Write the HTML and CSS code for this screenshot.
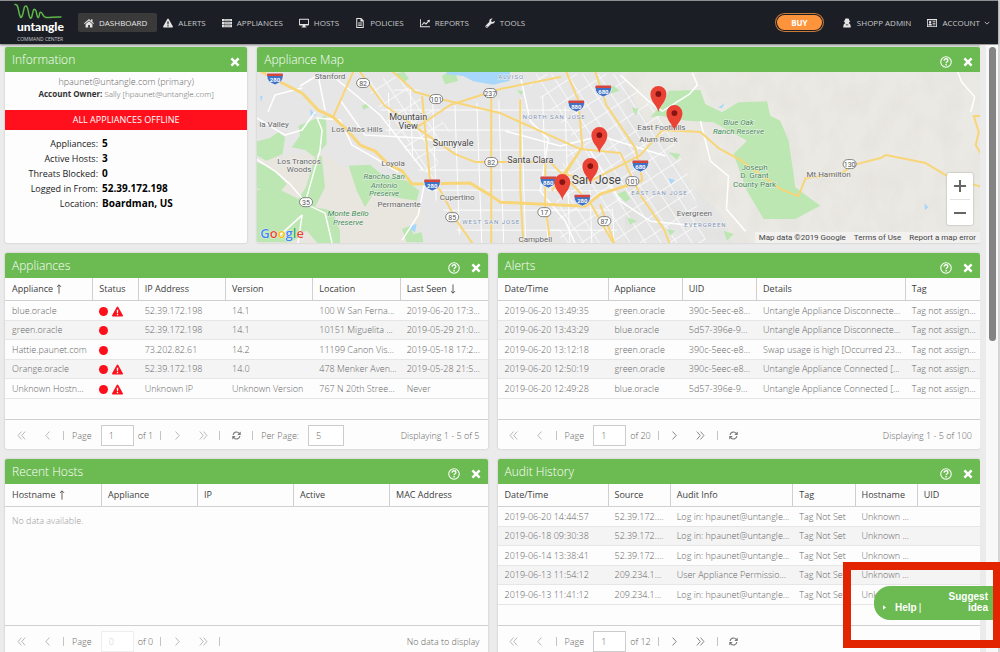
FILE: index.html
```html
<!DOCTYPE html>
<html lang="en">
<head>
<meta charset="utf-8">
<title>Untangle Command Center</title>
<link rel="stylesheet" href="styles.css">
</head>
<body>
<svg class="sprite" aria-hidden="true">
  <symbol id="home" viewBox="0 0 16 16"><path d="M8 1.5 0 8.4l1.2 1.3L8 3.9l6.800 5.800L16 8.400l-2.500-2.200V2h-2.200v2.300z"/><path d="M8 5.200 2.500 9.900V15h4.100v-4h2.800v4h4.100V9.900z"/></symbol>
  <symbol id="warn" viewBox="0 0 16 16"><path fill-rule="evenodd" d="M8 .8c.5 0 .9.3 1.100.7l6.700 11.900c.5.900-.1 1.800-1.100 1.800H1.300c-1 0-1.600-.9-1.100-1.800L6.900 1.500C7.100 1.100 7.500.8 8 .8zM6.900 5.400l.3 5h1.600l.3-5zm.1 6.200v1.900h2v-1.900z"/></symbol>
  <symbol id="server" viewBox="0 0 16 16"><path d="M0 1.500h16v3.700H0zM0 6.200h16v3.700H0zM0 10.900h16v3.700H0z"/><path d="M4.500 1.500v13M6 3.400h8M6 8h8M6 12.700h8" stroke="#1b1e25" stroke-width=".7"/></symbol>
  <symbol id="screen" viewBox="0 0 16 16"><path fill-rule="evenodd" d="M1.500 1h13q1.500 0 1.500 1.500v8q0 1.500-1.500 1.500H10l.5 2H12v1.200H4V14h1.500l.5-2H1.500Q0 12 0 10.500v-8Q0 1 1.500 1zm0 1.600v6.800h13V2.600z"/></symbol>
  <symbol id="file" viewBox="0 0 16 16"><path fill-rule="evenodd" d="M2 0h8l4 4v12H2zm1.600 1.500v13h8.800V5.400H8.700V1.500zM5 7h6v1.200H5zm0 2.300h6v1.200H5zm0 2.300h6v1.200H5z"/></symbol>
  <symbol id="chart" viewBox="0 0 16 16"><path d="M0 2h1.400v11.200H16v1.400H0zM2.600 10.800 6.400 6l3 2.400 3.200-3.700-1.300-1.300 4.500-.6-.4 4.400-1.400-1.300-4.300 5-3.100-2.400-3.700 3.900z"/></symbol>
  <symbol id="wrench" viewBox="0 0 16 16"><path fill-rule="evenodd" d="M15.500 4.300c.9 3.100-2.200 5.900-5.300 4.700l-6.100 6c-1.900 1.700-4.700-1-3-3l6-6C6 2.800 9 0 12.200.9L9.800 3.500l.4 2.300 2.400.5zM2.800 12.300a.9.900 0 1 0 .1 1.800.9.900 0 0 0-.1-1.800z"/></symbol>
  <symbol id="agent" viewBox="0 0 16 16"><path fill-rule="evenodd" d="M5 1.200Q6.300.2 8 .9q1.700-.7 3 .3l.7 3.300h1.300v1.300h-1.200q0 1.700-1 2.700 3.200 1 3.200 6.500H2q0-5.500 3.200-6.500-1-1-1-2.700H3V4.500h1.300zM6 10.500v1.200h4v-1.200z"/></symbol>
  <symbol id="card" viewBox="0 0 16 16"><path fill-rule="evenodd" d="M0 1.500h16v13H0zm1.300 2.200v9.500h13.400V3.700zM5 4.800a1.900 1.900 0 1 1 0 3.900 1.900 1.900 0 0 1 0-3.900zM2.200 12q0-2.700 1.500-2.700h2.600q1.500 0 1.500 2.700zM9 5h4.500v1.300H9zm0 2.700h4.500V9H9zm0 2.700h4.500v1.300H9z"/></symbol>
  <symbol id="close" viewBox="0 0 16 16"><path d="M3.600.8 8 5.200 12.400.8l2.800 2.800L10.800 8l4.400 4.400-2.800 2.800L8 10.800l-4.400 4.400-2.800-2.800L5.200 8 .8 3.600z"/></symbol>
  <symbol id="help" viewBox="0 0 16 16"><circle cx="8" cy="8" r="7" fill="none" stroke="currentColor" stroke-width="1.400"/><path d="M5.500 6.200C5.500 2.700 10.600 3 10.600 6c0 1.800-2.500 1.700-2.500 3.600" fill="none" stroke="currentColor" stroke-width="1.700"/><path d="M7.200 10.800H9v1.700H7.200z"/></symbol>
  <symbol id="first" viewBox="0 0 16 16"><path d="M8 1 2 8l6 7M14.500 1l-6 7 6 7" class="line"/></symbol>
  <symbol id="prev" viewBox="0 0 16 16"><path d="M11.500 1 5 8l6.500 7" class="line"/></symbol>
  <symbol id="next" viewBox="0 0 16 16"><path d="M4.500 1 11 8l-6.500 7" class="line"/></symbol>
  <symbol id="last" viewBox="0 0 16 16"><path d="M1.500 1l6 7-6 7M8 1l6 7-6 7" class="line"/></symbol>
  <symbol id="refresh" viewBox="0 0 16 16"><path d="M2 7C2.500 1.500 9.500 0 13 4.300M14 9c-.5 5.500-7.500 7-11 2.700" fill="none" stroke="currentColor" stroke-width="2"/><path d="M15.500 1v6H9.500zM.5 15V9h6z"/></symbol>
  <symbol id="up" viewBox="0 0 8 12"><path d="M4 11.500V1M1.500 3.500 4 1l2.500 2.500" class="thin"/></symbol>
  <symbol id="down" viewBox="0 0 8 12"><path d="M4 .5V11M1.500 8.500 4 11l2.500-2.500" class="thin"/></symbol>
  <symbol id="chev" viewBox="0 0 8 8"><path d="M1 2.500 4 5.500l3-3" class="thin"/></symbol>
</svg>

<div class="window">
  <header class="topbar">
    <a class="logo" href="#">
      <svg class="squiggle" viewBox="0 0 48 18" aria-hidden="true"><path d="M1 1.500C4 1 4 5 5 9.500S7 17 8.500 12 10 2.500 12 3s2 5 3 9 2 4.500 3 1 1-7 2.800-6.600 1.500 4 2.400 6.600 1.600 2 2-.5.800-4 2.200-3 1.500 4.500 4.500 5 9-.8 15-.5"/></svg>
      <span class="brand">untangle</span>
      <span class="tagline">COMMAND CENTER</span>
    </a>
    <nav class="menu">
      <a class="item active" href="#"><svg><use href="#home"/></svg>DASHBOARD</a>
      <a class="item" href="#"><svg><use href="#warn"/></svg>ALERTS</a>
      <a class="item" href="#"><svg><use href="#server"/></svg>APPLIANCES</a>
      <a class="item" href="#"><svg><use href="#screen"/></svg>HOSTS</a>
      <a class="item" href="#"><svg><use href="#file"/></svg>POLICIES</a>
      <a class="item" href="#"><svg><use href="#chart"/></svg>REPORTS</a>
      <a class="item" href="#"><svg><use href="#wrench"/></svg>TOOLS</a>
    </nav>
    <div class="user">
      <button class="buy" type="button">BUY</button>
      <a class="item" href="#"><svg><use href="#agent"/></svg>SHOPP ADMIN</a>
      <a class="item account" href="#"><svg><use href="#card"/></svg>ACCOUNT<svg class="caret"><use href="#chev"/></svg></a>
    </div>
  </header>

  <div class="viewport">
  <main class="board">
    <div class="row top">
      <section class="panel">
        <header class="head"><h2>Information</h2><button type="button" aria-label="Close"><svg><use href="#close"/></svg></button></header>
        <div class="info">
          <p class="mail">hpaunet@untangle.com (primary)</p>
          <p class="owner"><b>Account Owner:</b> Sally [hpaunet@untangle.com]</p>
          <p class="offline">ALL APPLIANCES OFFLINE</p>
          <dl class="stats">
            <dt>Appliances:</dt><dd>5</dd>
            <dt>Active Hosts:</dt><dd>3</dd>
            <dt>Threats Blocked:</dt><dd>0</dd>
            <dt>Logged in From:</dt><dd>52.39.172.198</dd>
            <dt>Location:</dt><dd>Boardman, US</dd>
          </dl>
        </div>
      </section>

      <section class="panel">
        <header class="head"><h2>Appliance Map</h2><button type="button" aria-label="Help"><svg class="round"><use href="#help"/></svg></button><button type="button" aria-label="Close"><svg><use href="#close"/></svg></button></header>
        <div class="map">
          <svg class="canvas" viewBox="257 72 722 171" preserveAspectRatio="xMinYMin slice" role="img" aria-label="Map of San Jose">
            <defs>
              <pattern id="grid" width="22" height="20" patternUnits="userSpaceOnUse" patternTransform="skewX(2)"><path d="M0 10H22M11 0V20" stroke="#fff" stroke-width=".9" fill="none"/></pattern>
              <pattern id="diag" width="13" height="16" patternUnits="userSpaceOnUse" patternTransform="rotate(-33)"><path d="M0 8H13M6 0V16" stroke="#fbfbfb" stroke-width=".8" fill="none"/></pattern>
              <filter id="relief" x="0" y="0" width="100%" height="100%"><feTurbulence type="fractalNoise" baseFrequency=".05 .035" numOctaves="4" seed="8"/><feColorMatrix values="0 0 0 0 .6  0 0 0 0 .59  0 0 0 0 .55  1.400 0 0 0 -.55"/></filter>
              <g id="pin"><path d="M0 0C-.8-6-8-10-8-18a8 8 0 0 1 16 0C8-10 .8-6 0 0z" fill="#ea4335"/><circle cy="-18" r="2.900" fill="#851412"/></g>
              <g id="shield"><path d="M-8-5.500Q-9 0-5 3.500L0 6l5-2.500Q9 0 8-5.500z" fill="#4272c4" stroke="#fff" stroke-width=".7"/><path d="M-7.600-5.500H7.600L8-3H-8z" fill="#d5463d"/></g>
              <rect id="oval" x="-6.500" y="-4.500" width="13" height="9" rx="4.500" fill="#fff" stroke="#777" stroke-width=".9"/>
            </defs>
            <rect x="250" y="72" width="740" height="180" fill="#e6e6e6"/>
            <path d="M620 72H990V252H735L722 215 690 185 668 150 640 112z" fill="#ebe9e4"/>
            <path d="M250 160 320 152 345 168 410 185 425 215 405 252H250z" fill="#e9e6e0"/>
            <rect x="625" y="72" width="365" height="180" filter="url(#relief)" opacity=".2"/>

            <path d="M378 98 405 84 455 105 550 95 582 120 580 150 556 185 560 243H465L440 205 424 186 415 160 385 130z" fill="url(#grid)"/>
            <path d="M362 80 400 76 450 130 432 180 408 155z" fill="url(#diag)"/>
            <path d="M520 74H622L664 122 690 180 706 243H560L555 178 575 140z" fill="url(#diag)"/>
            <path d="M548 190h60l12 53h-72z" fill="url(#grid)"/>

            <g transform="translate(250 44) scale(.333)" fill="#bce7b2">
              <path d="M10 295 60 282 85 265 105 280 98 330 50 350 10 330zM145 245 195 225 228 215 230 300 195 340 165 318 125 310 150 275zM195 340 215 335 225 430 195 490 248 500 270 560 270 600H205L170 560 130 575 85 530 30 540 10 440 75 430 145 465 168 430z"/>
              <path d="M10 350 70 375 110 420 85 450 10 430zM296 365 360 362 400 395 470 410 508 440 500 470 370 450 345 490 320 440zM456 555 480 545 490 570 515 565 520 595H470zM335 185l18-8 5 12-17 8zM575 97l22-16 20 10 8 20-40 10zM432 90l30-6 15 20-15 10z"/>
              <path d="M10 455h64l60 60 25 60-40 20H10z"/>
            </g>
            <g transform="translate(500 44) scale(.333)" fill="#bce7b2">
              <path d="M450 220 495 170 505 140 600 138 615 180 665 205 715 175 800 172 810 215 840 230 865 290 880 390 885 430 960 485 885 525H790L740 440 700 330 740 290 640 235 560 230 480 215zM350 450l25-10 15 25-15 8zM395 190l20 5-10 20zM505 325l35 5-10 18zM670 560l30 10-20 20zM500 555l25 5-15 15zM310 130l30-5 18 15-30 10zM380 520l30 10-20 12zM50 138l20 4-8 12z"/>
            </g>
            <g transform="translate(250 44) scale(.333)" fill="#a7d8fb"><path d="M590 84h190v26l-50 12-60-10-30-16-50-5zM180 195l18 18-15 5zM30 155l8 2-5 18zM480 545l20-5-5 25-12-8zM1255 403l20 5-12 12zM1405 190l20-12-10 15zM2023 478l12 12-10 8z"/></g>

            <g fill="none" stroke="#fff" stroke-width="1.500" stroke-linejoin="round">
              <path d="M250 155 275 171 290 184 308 205 325 213 332 243M305 203 320 150 322 130 317 118 340 120 352 145 375 158 398 172M300 86 318 75 325 110M250 114 285 135 302 130 315 112M335 78 380 115 423 170M268 112 275 95 302 88M298 243 302 215 280 235M425 180 418 215 402 240M340 100 365 135 420 138 455 144"/>
              <path d="M957 72 961 82 974 97 970 112M620 75 648 101 662 111 689 94 697 85 692 73M700 121 710 161 728 176 726 209 745 231M520 76 530 121 548 139 540 191 565 221 575 244M590 151 620 201 650 221 700 226M505 131 560 146 600 136 665 156"/>
            </g>
            <g fill="none" stroke="#f8d577" stroke-width="3" stroke-linejoin="round" stroke-linecap="round">
              <path d="M262 72 280 82 302 93 318 110 333 117 345 128 360 145 375 151 388 164 402 171 412 184 470 183 490 195 500 202 585 206 600 194 640 181"/>
              <path d="M393 72 415 92 440 99 500 113 580 149 620 153 640 195 664 230 669 243M595 72 606 105 635 148 642 180M566 72 578 100 582 147M333 117 353 72M360 72 384 105 417 128 455 154 475 162 550 162 590 203 613 243M417 127 450 105 500 89 560 77M422 97 430 182 440 190 456 220 472 243M491 95V243M545 160V205L550 243M520 100 520 190 523 243" stroke-width="2"/>
              <path d="M552 190 582 147 565 174 590 181 640 155 662 130 700 132 718 148 740 160 780 189 798 196 805 178 840 174 852 165 880 158 885 155 925 163 945 175 990 190M982 116 973 116 978 132 975 145 982 157M600 205 614 243" stroke-width="2"/>
            </g>

            <g class="mark">
              <use href="#shield" x="275" y="79"/><text x="275" y="82">280</text>
              <use href="#shield" x="432" y="185"/><text x="432" y="188">280</text>
              <use href="#shield" x="603" y="91"/><text x="603" y="94">680</text>
              <use href="#shield" x="576" y="106"/><text x="576" y="109">880</text>
              <use href="#shield" x="640" y="166"/><text x="640" y="169">680</text>
              <use href="#shield" x="548" y="182"/><text x="548" y="185">880</text>
              <use href="#shield" x="582" y="200"/><text x="582" y="203">280</text>
            </g>
            <g class="route">
              <use href="#oval" x="363" y="83"/><text x="363" y="86">82</text>
              <use href="#oval" x="436" y="99"/><text x="436" y="102">101</text>
              <use href="#oval" x="490" y="93"/><text x="490" y="96">237</text>
              <use href="#oval" x="491" y="162"/><text x="491" y="165">82</text>
              <use href="#oval" x="306" y="202"/><text x="306" y="205">35</text>
              <use href="#oval" x="452" y="217"/><text x="452" y="220">85</text>
              <use href="#oval" x="544" y="212"/><text x="544" y="215">17</text>
              <use href="#oval" x="604" y="221"/><text x="604" y="224">87</text>
              <use href="#oval" x="632" y="181"/><text x="632" y="184">101</text>
              <use href="#oval" x="849" y="164"/><text x="849" y="167">130</text>
            </g>
            <g class="place">
              <text x="330" y="79">Stanford</text><text x="274" y="127">la Valley</text><text x="357" y="132">Los Altos Hills</text>
              <text x="299" y="164">Los Trancos</text><text x="299" y="172">Woods</text><text x="393" y="166">Loyola</text><text x="399" y="207">Permanente</text>
              <text x="457" y="200">Cupertino</text><text x="535" y="242">Campbell</text><text x="661" y="130">East Foothills</text><text x="658" y="142">Alum Rock</text><text x="694" y="216">Evergreen</text><text x="828" y="177">Mt Hamilton</text>
            </g>
            <g class="place town">
              <text x="408" y="120">Mountain</text><text x="408" y="129">View</text><text x="453" y="146">Sunnyvale</text><text x="530" y="163">Santa Clara</text>
            </g>
            <text class="place city" x="596" y="184">San Jose</text>
            <g class="place park">
              <text x="384" y="179">Rancho San</text><text x="384" y="188">Antonio</text><text x="384" y="196">Preserve</text><text x="348" y="216">Monte Bello</text><text x="348" y="225">Preserve</text>
              <text x="738" y="125">Blue Oak</text><text x="738" y="134">Ranch Reserve</text>
            </g>
            <g class="place park upright"><text x="754" y="170">Joseph</text><text x="754" y="178">D. Grant</text><text x="754" y="187">County Park</text></g>
            <g class="place area"><text x="554" y="119">NORTH SAN JOSE</text><text x="491" y="224">WEST SAN JOSE</text><text x="659" y="195">EAST SAN JOSE</text><text x="705" y="227">EVERGREEN</text><text x="511" y="79">ALVISO</text></g>

            <use href="#pin" x="658" y="112"/><use href="#pin" x="674" y="131"/><use href="#pin" x="599" y="153"/><use href="#pin" x="590" y="184"/><use href="#pin" x="562" y="200"/>
          </svg>
          <div class="google"><span class="b">G</span><span class="r">o</span><span class="y">o</span><span class="b">g</span><span class="g">l</span><span class="r">e</span></div>
          <div class="zoom"><button type="button" aria-label="Zoom in"><svg viewBox="0 0 12 12"><path d="M6 0V12M0 6H12"/></svg></button><button type="button" aria-label="Zoom out"><svg viewBox="0 0 12 12"><path d="M0 6H12"/></svg></button></div>
          <div class="credits"><span>Map data ©2019 Google</span><a href="#">Terms of Use</a><a href="#">Report a map error</a></div>
        </div>
      </section>
    </div>

    <div class="row">
      <section class="panel">
        <header class="head"><h2>Appliances</h2><button type="button" aria-label="Help"><svg class="round"><use href="#help"/></svg></button><button type="button" aria-label="Close"><svg><use href="#close"/></svg></button></header>
        <div class="data">
          <table>
            <colgroup><col class="w18"><col class="w9"><col class="w18"><col class="w18"><col class="w18"><col></colgroup>
            <thead><tr><th>Appliance <svg><use href="#up"/></svg></th><th>Status</th><th>IP Address</th><th>Version</th><th>Location</th><th>Last Seen <svg><use href="#down"/></svg></th></tr></thead>
            <tbody>
              <tr><td>blue.oracle</td><td><i class="dot"></i><svg class="alert"><use href="#warn"/></svg></td><td>52.39.172.198</td><td>14.1</td><td>100 W San Ferna...</td><td>2019-06-20 17:3...</td></tr>
              <tr><td>green.oracle</td><td><i class="dot"></i></td><td>52.39.172.198</td><td>14.1</td><td>10151 Miguelita ...</td><td>2019-05-29 21:0...</td></tr>
              <tr><td>Hattie.paunet.com</td><td><i class="dot"></i></td><td>73.202.82.61</td><td>14.2</td><td>11199 Canon Vis...</td><td>2019-05-18 17:2...</td></tr>
              <tr><td>Orange.oracle</td><td><i class="dot"></i><svg class="alert"><use href="#warn"/></svg></td><td>52.39.172.198</td><td>14.0</td><td>478 Menker Aven...</td><td>2019-05-28 21:5...</td></tr>
              <tr><td>Unknown Hostn...</td><td><i class="dot"></i><svg class="alert"><use href="#warn"/></svg></td><td>Unknown IP</td><td>Unknown Version</td><td>767 N 20th Stree...</td><td>Never</td></tr>
            </tbody>
          </table>
        </div>
        <footer class="pager">
          <button type="button" disabled aria-label="First page"><svg><use href="#first"/></svg></button><button type="button" disabled aria-label="Previous page"><svg><use href="#prev"/></svg></button><i class="sep"></i>
          <label for="p1">Page</label><input id="p1" value="1"><span class="of">of 1</span><i class="sep"></i>
          <button type="button" disabled aria-label="Next page"><svg><use href="#next"/></svg></button><button type="button" disabled aria-label="Last page"><svg><use href="#last"/></svg></button><i class="sep"></i>
          <button type="button" aria-label="Refresh"><svg><use href="#refresh"/></svg></button><i class="sep"></i>
          <label for="pp">Per Page:</label><input id="pp" class="wide" value="5"><span class="total">Displaying 1 - 5 of 5</span>
        </footer>
      </section>

      <section class="panel">
        <header class="head"><h2>Alerts</h2><button type="button" aria-label="Help"><svg class="round"><use href="#help"/></svg></button><button type="button" aria-label="Close"><svg><use href="#close"/></svg></button></header>
        <div class="data">
          <table>
            <colgroup><col class="w23"><col class="w15"><col class="w15"><col class="w31"><col></colgroup>
            <thead><tr><th>Date/Time</th><th>Appliance</th><th>UID</th><th>Details</th><th>Tag</th></tr></thead>
            <tbody>
              <tr><td>2019-06-20 13:49:35</td><td>green.oracle</td><td>390c-5eec-e8...</td><td>Untangle Appliance Disconnecte...</td><td>Tag not assign...</td></tr>
              <tr><td>2019-06-20 13:43:29</td><td>blue.oracle</td><td>5d57-396e-9...</td><td>Untangle Appliance Disconnecte...</td><td>Tag not assign...</td></tr>
              <tr><td>2019-06-20 13:12:18</td><td>green.oracle</td><td>390c-5eec-e8...</td><td>Swap usage is high [Occurred 23...</td><td>Tag not assign...</td></tr>
              <tr><td>2019-06-20 12:50:19</td><td>green.oracle</td><td>390c-5eec-e8...</td><td>Untangle Appliance Connected [...</td><td>Tag not assign...</td></tr>
              <tr><td>2019-06-20 12:49:28</td><td>blue.oracle</td><td>5d57-396e-9...</td><td>Untangle Appliance Connected [...</td><td>Tag not assign...</td></tr>
            </tbody>
          </table>
        </div>
        <footer class="pager">
          <button type="button" disabled aria-label="First page"><svg><use href="#first"/></svg></button><button type="button" disabled aria-label="Previous page"><svg><use href="#prev"/></svg></button><i class="sep"></i>
          <label for="p2">Page</label><input id="p2" value="1"><span class="of">of 20</span><i class="sep"></i>
          <button type="button" aria-label="Next page"><svg><use href="#next"/></svg></button><button type="button" aria-label="Last page"><svg><use href="#last"/></svg></button><i class="sep"></i>
          <button type="button" aria-label="Refresh"><svg><use href="#refresh"/></svg></button><span class="total">Displaying 1 - 5 of 100</span>
        </footer>
      </section>
    </div>

    <div class="row">
      <section class="panel">
        <header class="head"><h2>Recent Hosts</h2><button type="button" aria-label="Help"><svg class="round"><use href="#help"/></svg></button><button type="button" aria-label="Close"><svg><use href="#close"/></svg></button></header>
        <div class="data">
          <table>
            <colgroup><col class="w20"><col class="w20"><col class="w20"><col class="w20"><col></colgroup>
            <thead><tr><th>Hostname <svg><use href="#up"/></svg></th><th>Appliance</th><th>IP</th><th>Active</th><th>MAC Address</th></tr></thead>
          </table>
          <p class="empty">No data available.</p>
        </div>
        <footer class="pager">
          <button type="button" disabled aria-label="First page"><svg><use href="#first"/></svg></button><button type="button" disabled aria-label="Previous page"><svg><use href="#prev"/></svg></button><i class="sep"></i>
          <label for="p3">Page</label><input id="p3" value="0" disabled><span class="of">of 0</span><i class="sep"></i>
          <button type="button" disabled aria-label="Next page"><svg><use href="#next"/></svg></button><button type="button" disabled aria-label="Last page"><svg><use href="#last"/></svg></button><i class="sep"></i>
          <span class="total">No data to display</span>
        </footer>
      </section>

      <section class="panel">
        <header class="head"><h2>Audit History</h2><button type="button" aria-label="Help"><svg class="round"><use href="#help"/></svg></button><button type="button" aria-label="Close"><svg><use href="#close"/></svg></button></header>
        <div class="data">
          <table>
            <colgroup><col class="w23"><col class="w13"><col class="w25"><col class="w13"><col class="w13"><col></colgroup>
            <thead><tr><th>Date/Time</th><th>Source</th><th>Audit Info</th><th>Tag</th><th>Hostname</th><th>UID</th></tr></thead>
            <tbody>
              <tr><td>2019-06-20 14:44:57</td><td>52.39.172....</td><td>Log in: hpaunet@untangle...</td><td>Tag Not Set</td><td>Unknown ...</td><td></td></tr>
              <tr><td>2019-06-18 09:30:38</td><td>52.39.172....</td><td>Log in: hpaunet@untangle...</td><td>Tag Not Set</td><td>Unknown ...</td><td></td></tr>
              <tr><td>2019-06-14 13:38:41</td><td>52.39.172....</td><td>Log in: hpaunet@untangle...</td><td>Tag Not Set</td><td>Unknown ...</td><td></td></tr>
              <tr><td>2019-06-13 11:54:12</td><td>209.234.1...</td><td>User Appliance Permissio...</td><td>Tag Not Set</td><td>Unknown ...</td><td></td></tr>
              <tr><td>2019-06-13 11:41:12</td><td>209.234.1...</td><td>Log in: hpaunet@untangle...</td><td>Tag Not Set</td><td>Unknown ...</td><td></td></tr>
            </tbody>
          </table>
        </div>
        <footer class="pager">
          <button type="button" disabled aria-label="First page"><svg><use href="#first"/></svg></button><button type="button" disabled aria-label="Previous page"><svg><use href="#prev"/></svg></button><i class="sep"></i>
          <label for="p4">Page</label><input id="p4" value="1"><span class="of">of 12</span><i class="sep"></i>
          <button type="button" aria-label="Next page"><svg><use href="#next"/></svg></button><button type="button" aria-label="Last page"><svg><use href="#last"/></svg></button><i class="sep"></i>
          <button type="button" aria-label="Refresh"><svg><use href="#refresh"/></svg></button>
        </footer>
      </section>
    </div>
  </main>
  <div class="track"><div class="thumb"></div></div>
  </div>
</div>

<div class="callout">
  <div class="tab"><svg viewBox="0 0 4 6" aria-hidden="true"><path d="M0 0 4 3 0 6z"/></svg><a href="#">Help</a><span>|</span><a class="idea" href="#">Suggest idea</a></div>
</div>
</body>
</html>
```

FILE: styles.css
```css
* { box-sizing: border-box; }
html, body { height: 100%; }
body {
  margin: 0;
  padding-right: 2px;
  overflow: hidden;
  background: #d5d5d5;
  color: #666;
  font: 300 9px/12px "Open Sans", "Noto Sans", sans-serif;
}
h2, p, dl, dd { margin: 0; }
a { color: inherit; text-decoration: none; }
button { margin: 0; padding: 0; border: 0; background: none; color: inherit; font: inherit; }
svg { fill: currentColor; }
.sprite { display: none; }
.line { fill: none; stroke: currentColor; stroke-width: 1.6; }
.thin { fill: none; stroke: currentColor; stroke-width: 1; }

.window { display: flex; flex-direction: column; height: 100%; background: #ebebeb; }

/* top bar */
.topbar {
  display: flex;
  flex: none;
  align-items: center;
  height: 44px;
  margin-bottom: 1px;
  padding: 0 8px 0 14px;
  border-top: 1px solid #8d8f90;
  background: #1b1e25;
  box-shadow: 0 1px 2px #777;
  color: #c8c9ca;
  font-weight: 400;
  font-size: 8px;
}
.logo { display: flex; flex-direction: column; width: 64px; }
.squiggle { width: 48px; height: 18px; }
.squiggle path { fill: none; stroke: #5fb548; stroke-width: 1.5; stroke-linecap: round; }
.brand { margin-left: 3px; color: #fff; font: 900 12px/12px Lato, sans-serif; }
.tagline { margin: 2px 0 0 3px; font-size: 5px; line-height: 8px; white-space: nowrap; }
.menu, .user { display: flex; align-items: center; }
.user { margin-left: auto; }
.item { display: flex; align-items: center; height: 19px; padding: 0 10px 0 6px; border-radius: 2px; white-space: nowrap; }
.item svg { width: 10px; height: 10px; margin-right: 5px; color: #e4e4e4; }
.active { background: #3a3a3b; color: #e6e6e6; }
.account { padding-right: 0; }
.account .caret { width: 6px; height: 6px; margin: 0 0 0 4px; }
.buy {
  width: 45px;
  height: 15px;
  margin-right: 14px;
  border-radius: 8px;
  background: #fd943b;
  box-shadow: 0 0 0 1px #1b1e25, 0 0 0 2px #c87a38;
  color: #fff;
  font-weight: 700;
}

/* board */
.viewport { display: flex; flex: 1; min-height: 0; overflow: hidden; }
.board { display: flex; flex: 1; flex-direction: column; gap: 10px; padding: 2px 0 0 5px; }
.row { display: grid; flex: none; grid-template-columns: 1fr 1fr; grid-auto-rows: minmax(196px, auto); gap: 10px; }
.top { grid-template-columns: 242fr 722fr; }
.track { width: 18px; padding-left: 9px; padding-top: 2px; background: linear-gradient(90deg, #ebebeb 6px, #f8f8f8 6px); }
.thumb { width: 7px; height: 294px; border-radius: 4px; background: #848484; }

.panel { display: flex; flex-direction: column; min-width: 0; overflow: hidden; border-radius: 2px; background: #fdfdfd; box-shadow: 0 0 2px #b5b5b5; }
.head { display: flex; flex: none; align-items: center; gap: 11px; height: 25px; padding: 0 7px; background: #6cbb52; color: #fff; }
.head h2 { flex: 1; font-weight: 300; font-size: 12px; line-height: 24px; }
.head button { display: flex; padding-top: 5px; }
.head svg { width: 10px; height: 10px; }
.head .round { width: 12px; height: 12px; margin-top: -1px; }

/* information */
.info { text-align: center; }
.mail { padding-top: 4px; line-height: 12px; }
.owner { padding-bottom: 10px; font-size: 8px; line-height: 12px; }
.owner b { color: #333; font-weight: 700; }
.offline { background: #ff101c; color: #fff; line-height: 20px; font-weight: 400; }
.stats { display: grid; grid-template-columns: 93px 1fr; column-gap: 4px; padding-top: 6px; color: #222; font-weight: 400; line-height: 15px; text-align: left; }
.stats dt { text-align: right; }
.stats dd { color: #000; font-size: 10px; font-weight: 700; }

/* map */
.map { position: relative; flex: 1; }
.canvas { position: absolute; inset: 0; width: 100%; height: 100%; }
.canvas text { text-anchor: middle; font-family: Roboto, sans-serif; font-weight: 400; }
.mark text { fill: #fff; font-size: 6px; font-weight: 700; }
.route text { fill: #555; font-size: 7px; }
.place { fill: #666; font-size: 8px; stroke: #f3f3f3; stroke-width: 1px; paint-order: stroke; }
.town { fill: #444; font-size: 9px; }
.city { fill: #444; font-size: 12px; }
.park { fill: #3d8b4d; font-style: italic; font-size: 8px; }
.upright { font-style: normal; }
.area { fill: #7d92b5; font-size: 6px; letter-spacing: 1px; }
.google { position: absolute; left: 3px; bottom: 1px; font: 600 13px/18px "Open Sans", sans-serif; text-shadow: 0 0 1px #fff, 0 0 1px #fff; }
.b { color: #4285f4; } .r { color: #ea4335; } .y { color: #fbbc05; } .g { color: #34a853; }
.zoom { position: absolute; right: 7px; bottom: 18px; display: flex; flex-direction: column; width: 26px; padding: 0 3px; border-radius: 2px; background: #fff; box-shadow: 0 0 2px #999; }
.zoom button { display: grid; place-items: center; height: 26px; }
.zoom button + button { border-top: 1px solid #e3e3e3; }
.zoom svg { width: 12px; height: 12px; fill: none; stroke: #666; stroke-width: 2; }
.credits { position: absolute; right: 0; bottom: 0; display: flex; gap: 8px; padding: 0 4px; background: #f5f5f5b0; color: #444; font: 400 8px/11px Roboto, sans-serif; }

/* tables */
.data { flex: 1; }
table { width: 100%; border-collapse: separate; border-spacing: 0; table-layout: fixed; }
th, td { padding: 0 0 0 7px; border-bottom: 1px solid #e6e6e6; overflow: hidden; text-align: left; white-space: nowrap; }
th { height: 23px; border-color: #d0d0d0; color: #404040; font-weight: 400; }
th + th { border-left: 1px solid #d0d0d0; padding-left: 6px; }
th svg { width: 8px; height: 10px; margin-left: 0; vertical-align: -2px; }
td { height: 20px; }
tr:nth-child(even) td { height: 19px; background: #f4f4f4; }
.w9 { width: 9.4%; } .w13 { width: 12.9%; } .w15 { width: 15.4%; } .w18 { width: 18.1%; } .w20 { width: 19.9%; } .w23 { width: 22.8%; } .w25 { width: 25.4%; } .w31 { width: 30.8%; }
.dot { display: inline-block; width: 9px; height: 9px; border-radius: 50%; background: #fd101c; vertical-align: middle; }
.alert { width: 11px; height: 11px; margin-left: 4px; color: #fd101c; vertical-align: middle; }
.empty { padding: 8px 7px; color: #999; }

/* pager */
.pager { display: flex; flex: none; align-items: center; height: 30px; padding: 2px 8px 0 3px; border-top: 1px solid #d0d0d0; }
.pager button { display: grid; place-items: center; width: 26px; height: 20px; color: #777; }
.pager button:disabled { color: #b0b0b0; }
.pager svg { width: 9px; height: 9px; }
.pager label { margin: 0 9px 0 5px; }
.pager input { width: 33px; height: 21px; padding: 0 0 0 7px; border: 1px solid #ccc; background: #fff; color: #666; font: inherit; }
.pager .wide { width: 36px; }
.pager input:disabled { border-color: #eee; color: #ccc; }
.sep { width: 1px; height: 9px; margin: 0 3px; background: #c4c4c4; }
.of { margin: 0 4px; }
.total { margin-left: auto; }

/* highlighted help tab */
.callout { position: fixed; right: 0; bottom: 4px; width: 157px; height: 86px; padding-top: 16px; border: 8px solid #e32400; border-right-width: 7px; }
.tab { display: flex; align-items: flex-end; gap: 2px; height: 34px; margin-left: 23px; padding: 0 5px 7px 9px; border-radius: 16px 0 0 16px; background: #6cbb52; color: #fff; font: 700 10px/11px "Liberation Sans", Arial, sans-serif; }
.tab svg { width: 3px; height: 5px; margin: 0 7px 3px 0; }
.tab span { font-weight: 400; }
.idea { width: 42px; margin-left: auto; text-align: right; }
```
